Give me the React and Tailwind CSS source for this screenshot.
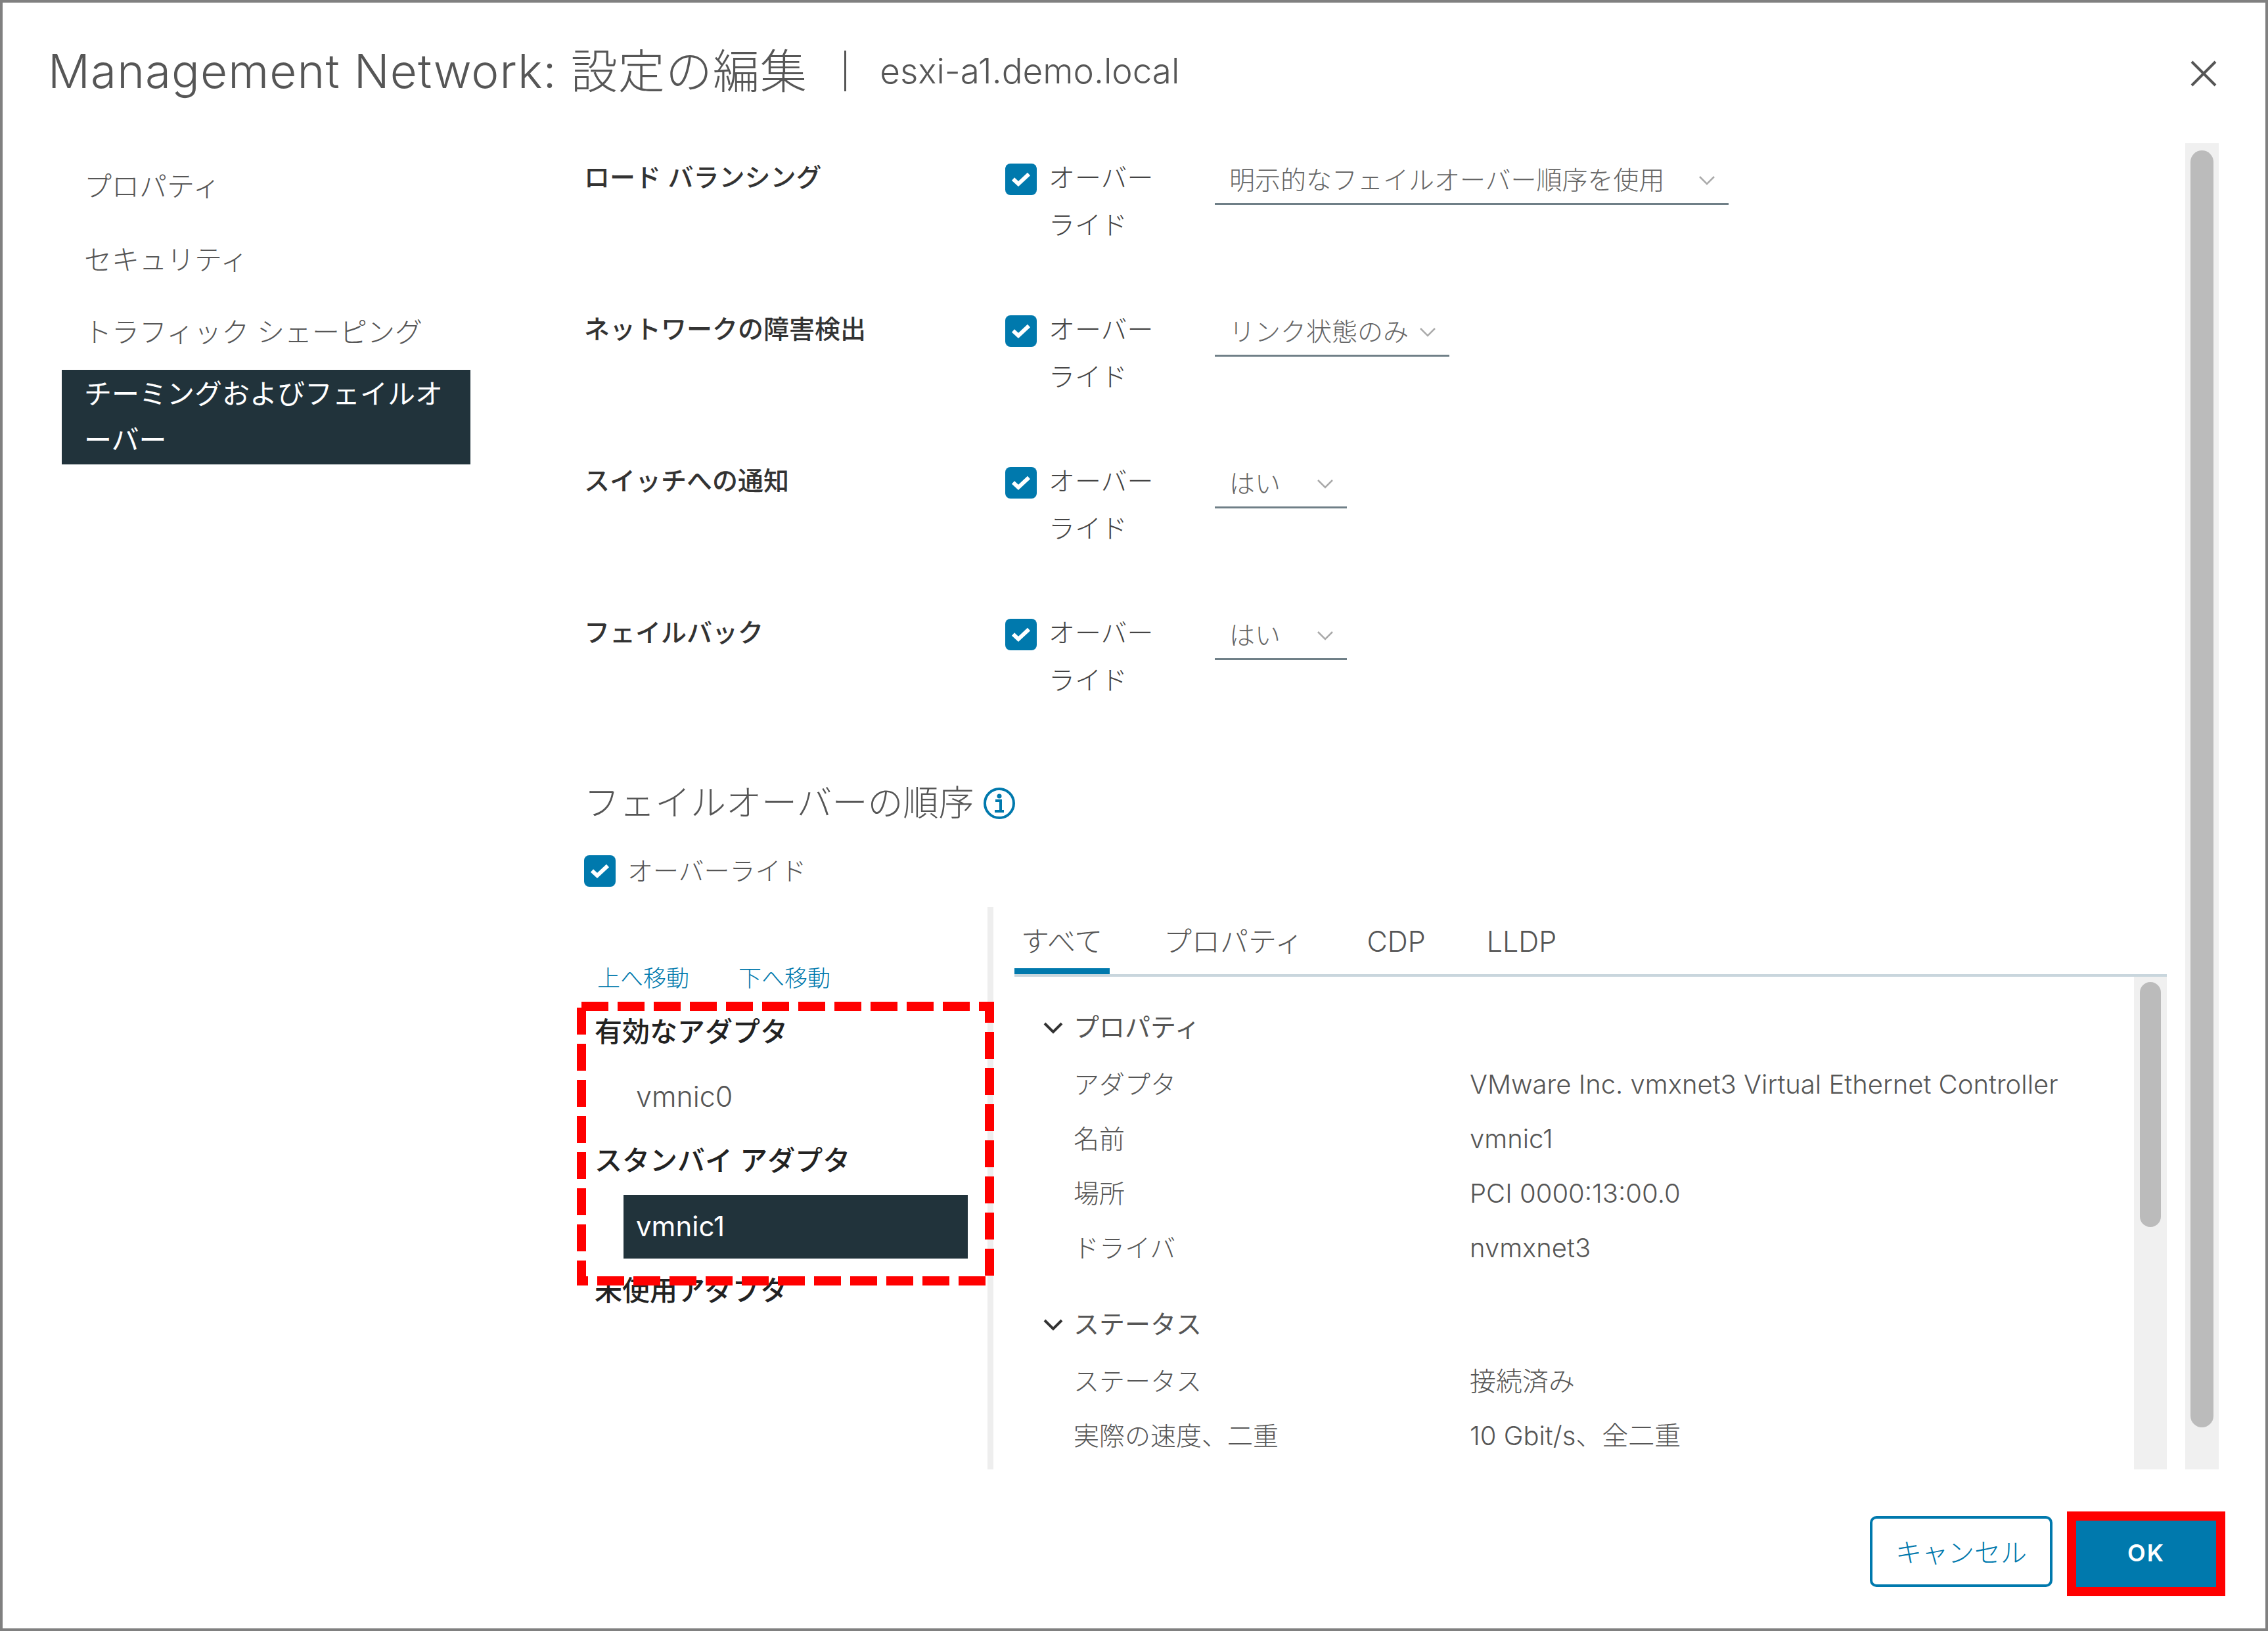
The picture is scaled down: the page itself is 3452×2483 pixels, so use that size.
import { Fragment } from 'react';

const teaming = [
  { label: 'ロード バランシング', value: '明示的なフェイルオーバー順序を使用', width: 'w-[782px]' },
  { label: 'ネットワークの障害検出', value: 'リンク状態のみ', width: 'w-[357px]' },
  { label: 'スイッチへの通知', value: 'はい', width: 'w-[201px]' },
  { label: 'フェイルバック', value: 'はい', width: 'w-[201px]' },
];

const sections = [
  {
    title: 'プロパティ',
    top: 'mt-[42px]',
    rows: [
      ['アダプタ', 'VMware Inc. vmxnet3 Virtual Ethernet Controller'],
      ['名前', 'vmnic1'],
      ['場所', 'PCI 0000:13:00.0'],
      ['ドライバ', 'nvmxnet3'],
    ],
  },
  {
    title: 'ステータス',
    top: 'mt-[40px]',
    rows: [
      ['ステータス', '接続済み'],
      ['実際の速度、二重', '10 Gbit/s、全二重'],
    ],
  },
];

function Checkbox() {
  return (
    <span className="flex h-[48px] w-[48px] shrink-0 items-center justify-center rounded-[8px] bg-[#0079ad]">
      <svg width="30" height="30" viewBox="0 0 30 30" fill="none">
        <path d="M3 14.5l8 7.5L27 7" stroke="#fff" strokeWidth="6" />
      </svg>
    </span>
  );
}

function Select({ value, width }) {
  return (
    <div className={`${width} mt-[5px] flex h-[72px] items-center justify-between border-b-[3px] border-[#6f7f87] pl-[22px] pr-[20px] text-[39px] font-light text-[#666]`}>
      <span className="whitespace-nowrap">{value}</span>
      <svg width="26" height="16" viewBox="0 0 26 16" fill="none">
        <path d="M2 2l11 11L24 2" stroke="#aaa" strokeWidth="2.5" />
      </svg>
    </div>
  );
}

export default function App() {
  return (
    <div className="flex h-[2483px] w-[3452px] flex-col overflow-hidden border-4 border-[#808080] bg-white font-['Inter','Noto_Sans_CJK_JP',sans-serif] text-[#565656]">
      <div className="flex h-[214px] shrink-0 items-start pl-[69px] pt-[64px]">
        <h1 className="text-[71px] font-light leading-[80px] tracking-[1.1px] text-[#565656]">Management Network: 設定の編集</h1>
        <div className="ml-[56px] mt-[9px] h-[62px] w-[3px] bg-[#565656]" />
        <span className="ml-[51px] text-[53px] font-light leading-[80px]">esxi-a1.demo.local</span>
        <svg className="ml-auto mr-[74px] mt-[24px]" width="40" height="40" viewBox="0 0 40 40" fill="none">
          <path d="M2 2l36 36M38 2L2 38" stroke="#565656" strokeWidth="4" />
        </svg>
      </div>

      <div className="flex h-[2019px] shrink-0">
        <nav className="ml-[90px] w-[622px] shrink-0 text-[42px] font-light leading-[70px]">
          <div className="mt-[31px] pl-[34px]">プロパティ</div>
          <div className="mt-[42px] pl-[34px]">セキュリティ</div>
          <div className="mt-[40px] pl-[34px]">トラフィック シェーピング</div>
          <div className="mt-[22px] h-[144px] bg-[#21333b] pl-[34px] pt-[2px] font-normal text-white">
            チーミングおよびフェイルオ
            <br />
            ーバー
          </div>
        </nav>

        <main className="ml-[173px] flex w-[2409px] shrink-0 flex-col">
          <div className="pt-[17px]">
            {teaming.map((row) => (
              <div key={row.label} className="flex h-[231px] items-start">
                <div className="w-[641px] shrink-0 text-[39px] font-medium leading-[70px] text-[#333]">{row.label}</div>
                <div className="mt-[14px]">
                  <Checkbox />
                </div>
                <div className="ml-[18px] w-[253px] shrink-0 text-[40px] font-light leading-[72px] text-[#444]">
                  オーバー
                  <br />
                  ライド
                </div>
                <Select value={row.value} width={row.width} />
              </div>
            ))}
          </div>

          <div className="mt-[29px] flex h-[70px] shrink-0 items-center text-[54px] font-light leading-[70px]">
            フェイルオーバーの順序
            <svg className="ml-[14px]" width="50" height="50" viewBox="0 0 50 50" fill="none">
              <circle cx="25" cy="25" r="22" stroke="#0079ad" strokeWidth="4" />
              <circle cx="25" cy="14" r="3.5" fill="#0079ad" />
              <path d="M19 21h8v16M18 37h14" stroke="#0079ad" strokeWidth="4" />
            </svg>
          </div>
          <div className="mt-[33px] flex h-[70px] shrink-0 items-center text-[39px] font-light">
            <Checkbox />
            <span className="ml-[18px]">オーバーライド</span>
          </div>

          <div className="mt-[20px] flex min-h-0 flex-1">
            <div className="relative w-[614px] shrink-0">
              <div className="flex gap-[75px] pl-[20px] pt-[73px] text-[35px] font-light leading-[70px] text-[#0079ad]">
                <span>上へ移動</span>
                <span>下へ移動</span>
              </div>
              <div className="mt-[12px] pl-[16px] text-[42px] font-medium leading-[70px] text-[#222]">有効なアダプタ</div>
              <div className="mt-[16px] h-[96px] pl-[79px] text-[43px] font-light leading-[94px]">vmnic0</div>
              <div className="mt-[14px] pl-[16px] text-[42px] font-medium leading-[70px] text-[#222]">スタンバイ アダプタ</div>
              <div className="ml-[60px] mt-[17px] h-[97px] w-[524px] bg-[#21333b] pl-[19px] text-[42px] leading-[95px] text-white">vmnic1</div>
              <div className="mt-[14px] pl-[16px] text-[42px] font-medium leading-[70px] text-[#222]">未使用アダプタ</div>
              <svg className="absolute left-[-11px] top-[144px]" width="635" height="432" fill="none">
                <rect x="7" y="7" width="621" height="418" stroke="#f00" strokeWidth="14" strokeDasharray="41 14" />
              </svg>
            </div>
            <div className="w-[9px] shrink-0 bg-[#eee]" />

            <div className="flex w-[1786px] shrink-0 flex-col pl-[32px]">
              <div className="flex h-[106px] shrink-0 border-b-[4px] border-[#c9d6dd] text-[43px] font-light leading-[104px]">
                <div className="h-[102px] w-[145px] border-b-[9px] border-[#0079ad] pl-[10px]">すべて</div>
                <span className="ml-[82px]">プロパティ</span>
                <span className="ml-[97px]">CDP</span>
                <span className="ml-[93px]">LLDP</span>
              </div>
              <div className="flex min-h-0 flex-1">
                <div className="flex-1 overflow-hidden pl-[90px] text-[39px] font-light">
                  {sections.map((s) => (
                    <Fragment key={s.title}>
                      <div className={`${s.top} relative flex h-[70px] items-center font-normal leading-[70px]`}>
                        <svg className="absolute left-[-47px] top-[26px]" width="32" height="20" viewBox="0 0 32 20" fill="none">
                          <path d="M3 3l13 13L29 3" stroke="#333" strokeWidth="4" />
                        </svg>
                        {s.title}
                      </div>
                      <div className="mt-[10px] grid grid-cols-[603px_1fr]">
                        {s.rows.map(([label, value]) => (
                          <Fragment key={label}>
                            <div className="h-[83px] leading-[83px]">{label}</div>
                            <div className="h-[83px] text-[40px] leading-[83px]">{value}</div>
                          </Fragment>
                        ))}
                      </div>
                    </Fragment>
                  ))}
                </div>
                <div className="w-[50px] shrink-0 bg-[#f0f0f0] px-[9px] pt-[8px]">
                  <div className="h-[373px] rounded-full bg-[#bbb]" />
                </div>
              </div>
            </div>
          </div>
        </main>

        <div className="ml-[28px] w-[51px] shrink-0 bg-[#f0f0f0] px-[8px] pt-[11px]">
          <div className="h-[1944px] rounded-full bg-[#bbb]" />
        </div>
      </div>

      <div className="flex flex-1 items-start justify-end pr-[61px] pt-[64px]">
        <button className="mt-[7px] h-[108px] w-[278px] rounded-[10px] border-[4px] border-[#0079ad] pt-[4px] text-[40px] font-light text-[#0079ad]">キャンセル</button>
        <div className="ml-[22px] border-[14px] border-[#f00]">
          <button className="block h-[101px] w-[213px] bg-[#0079ad] pb-[4px] text-[36px] font-semibold tracking-[2px] text-white">OK</button>
        </div>
      </div>
    </div>
  );
}
